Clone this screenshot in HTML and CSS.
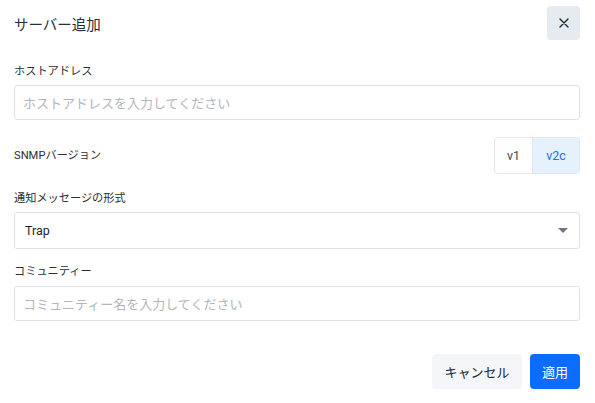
FILE: index.html
```html
<!DOCTYPE html>
<html lang="ja">
<head>
<meta charset="utf-8">
<link rel="stylesheet" href="styles.css">
</head>
<body>
<div class="dialog">
  <div class="header">
    <div class="title">サーバー追加</div>
    <button class="close" aria-label="close">
      <svg width="10" height="10" viewBox="0 0 10 10"><path d="M1 1L9 9M9 1L1 9" stroke="#1f2933" stroke-width="1.4" stroke-linecap="round"/></svg>
    </button>
  </div>

  <div class="field f1">
    <div class="label">ホストアドレス</div>
    <div class="input placeholder">ホストアドレスを入力してください</div>
  </div>

  <div class="row snmp">
    <div class="label">SNMPバージョン</div>
    <div class="seg">
      <div class="seg-item">v1</div>
      <div class="seg-item active">v2c</div>
    </div>
  </div>

  <div class="field f3">
    <div class="label">通知メッセージの形式</div>
    <div class="input select">
      <span>Trap</span>
      <span class="caret"></span>
    </div>
  </div>

  <div class="field f4">
    <div class="label">コミュニティー</div>
    <div class="input placeholder">コミュニティー名を入力してください</div>
  </div>

  <div class="footer">
    <button class="btn cancel">キャンセル</button>
    <button class="btn apply">適用</button>
  </div>
</div>
</body>
</html>
```

FILE: styles.css
```css
* { box-sizing: border-box; }
html, body { margin: 0; padding: 0; background: #fff; }
body {
  font-family: "Roboto", "Noto Sans CJK JP", sans-serif;
  color: #212529;
}
.dialog {
  width: 595px;
  padding: 6px 15px 0 14px;
}
.header {
  display: flex;
  align-items: center;
  justify-content: space-between;
  height: 34px;
}
.title {
  font-size: 14.5px;
  color: #2b2f33;
}
.close {
  width: 33px;
  height: 34px;
  border: none;
  border-radius: 4px;
  background: #e6ebf2;
  display: flex;
  align-items: center;
  justify-content: center;
  padding: 0;
}
.label {
  font-size: 11.2px;
  line-height: 16px;
  color: #2b2f33;
}
.field .label { margin-bottom: 5px; }
.f1 { margin-top: 24px; }
.input {
  height: 35px;
  border: 1px solid #dfe2e6;
  border-radius: 3px;
  padding: 0 8px;
  display: flex;
  align-items: center;
  font-size: 13px;
}
.placeholder { color: #b1b6bc; }
.snmp {
  margin-top: 17px;
  display: flex;
  align-items: center;
  justify-content: space-between;
}
.seg {
  display: flex;
  height: 37px;
  border: 1px solid #e3e6ea;
  border-radius: 4px;
  overflow: hidden;
}
.seg-item {
  display: flex;
  align-items: center;
  justify-content: center;
  font-size: 12.5px;
  color: #3d4651;
  width: 37px;
}
.seg-item.active {
  width: 47px;
  border-left: 1px solid #e3e6ea;
  background: #e5f1fd;
  color: #1f6fe5;
}
.f3 { margin-top: 17px; }
.select {
  height: 37px;
  justify-content: space-between;
  color: #212529;
  font-size: 12.5px;
  padding: 0 11px 0 10px;
}
.caret {
  width: 0;
  height: 0;
  border-left: 5px solid transparent;
  border-right: 5px solid transparent;
  border-top: 5px solid #6b7380;
}
.f4 { margin-top: 15px; }
.f4 .label { margin-bottom: 6px; }
.footer {
  margin-top: 33px;
  display: flex;
  justify-content: flex-end;
  gap: 8px;
}
.btn {
  height: 35px;
  border: none;
  border-radius: 4px;
  font-family: "Roboto", "Noto Sans CJK JP", sans-serif;
  font-size: 13px;
  padding: 0;
}
.cancel {
  width: 90px;
  background: #f4f6fa;
  color: #22262b;
}
.apply {
  width: 50px;
  background: #0b6cff;
  color: #fff;
}
```
